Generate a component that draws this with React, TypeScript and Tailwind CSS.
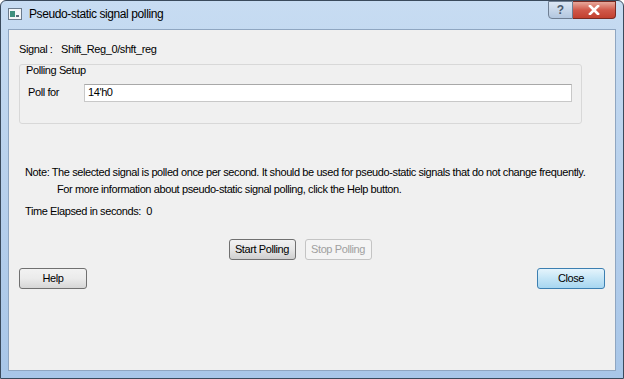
import React from "react";

function TitleIcon() {
  return (
    <svg width="14" height="12" viewBox="0 0 14 12">
      <rect x="0.5" y="0.5" width="13" height="11" fill="#f4f6f8" stroke="#6b7b8c" />
      <rect x="2" y="3" width="5" height="6" fill="#3f8f7d" />
      <rect x="8" y="7" width="3" height="2" fill="#5a6b7a" />
    </svg>
  );
}

export default function App() {
  const font = { fontFamily: '"Liberation Sans", Arial, sans-serif' };
  return (
    <div
      className="w-[624px] h-[379px] flex flex-col rounded-t-[6px] border border-[#3a4a5c] bg-gradient-to-b from-[#c7dcf2] via-[#b7d0ec] to-[#a8c6e8] overflow-hidden"
      style={font}
    >
      <div className="h-[28px] flex items-start shrink-0">
        <div className="flex items-center gap-[7px] pl-[7px] pt-[6px]">
          <TitleIcon />
          <span className="text-[12px] text-black leading-[14px] tracking-[-0.4px]">
            Pseudo-static signal polling
          </span>
        </div>
        <div className="ml-auto mr-[7px] flex">
          <div className="w-[25px] h-[18px] border border-[#6f7f93] rounded-bl-[4px] bg-gradient-to-b from-[#dce7f4] to-[#b3c7df] flex items-center justify-center text-[12px] font-bold text-[#4b5a6b]">
            ?
          </div>
          <div className="w-[43px] h-[18px] border border-l-0 border-[#7a2a22] rounded-br-[4px] bg-gradient-to-b from-[#e6a89c] via-[#d0584a] to-[#c2402f] flex items-center justify-center">
            <svg width="12" height="10" viewBox="0 0 12 10">
              <path d="M2 1 L10 9 M10 1 L2 9" stroke="#fff" strokeWidth="2.6" strokeLinecap="square" />
            </svg>
          </div>
        </div>
      </div>
      <div className="flex-1 mx-[7px] mb-[7px] border border-[#8fa6c1] bg-[#f0f0f0] flex flex-col text-[11px] tracking-[-0.4px] text-black whitespace-nowrap">
        <div className="pl-[10px] pt-[11px] flex">
          <span className="w-[42px]">Signal :</span>
          <span>Shift_Reg_0/shft_reg</span>
        </div>
        <div className="ml-[10px] mr-[33px] mt-[6px] h-[60px] border border-[#d8d8d8] rounded-[3px] flex flex-col">
          <div className="pl-[6px] leading-[11px]">Polling Setup</div>
          <div className="flex items-center mt-[8px] pl-[8px] pr-[9px]">
            <span className="w-[56px]">Poll for</span>
            <div className="flex-1 h-[18px] bg-white border border-[#c8c8c8] border-t-[#a8a8a8] pl-[3px] flex items-center">
              14'h0
            </div>
          </div>
        </div>
        <div className="mt-[40px] pl-[16px] leading-[17px]">
          <div>Note: The selected signal is polled once per second. It should be used for pseudo-static signals that do not change frequently.</div>
          <div className="pl-[32px]">For more information about pseudo-static signal polling, click the Help button.</div>
          <div className="mt-[5px]">Time Elapsed in seconds:&nbsp; 0</div>
        </div>
        <div className="flex justify-center gap-[9px] mt-[19px] pr-[24px]">
          <div className="w-[67px] h-[21px] border border-[#707070] rounded-[3px] bg-gradient-to-b from-[#f2f2f2] via-[#e6e6e6] to-[#cfcfcf] flex items-center justify-center">
            Start Polling
          </div>
          <div className="w-[67px] h-[21px] border border-[#c4c4c4] rounded-[3px] bg-[#f4f4f4] text-[#a0a0a0] flex items-center justify-center">
            Stop Polling
          </div>
        </div>
        <div className="flex justify-between px-[10px] mt-[8px]">
          <div className="w-[68px] h-[21px] border border-[#707070] rounded-[3px] bg-gradient-to-b from-[#f2f2f2] via-[#ebebeb] to-[#d6d6d6] flex items-center justify-center">
            Help
          </div>
          <div className="w-[68px] h-[21px] border border-[#3c7fb1] rounded-[3px] bg-gradient-to-b from-[#e5f4fc] via-[#c4e5f6] to-[#a7d6f1] flex items-center justify-center">
            Close
          </div>
        </div>
      </div>
    </div>
  );
}
